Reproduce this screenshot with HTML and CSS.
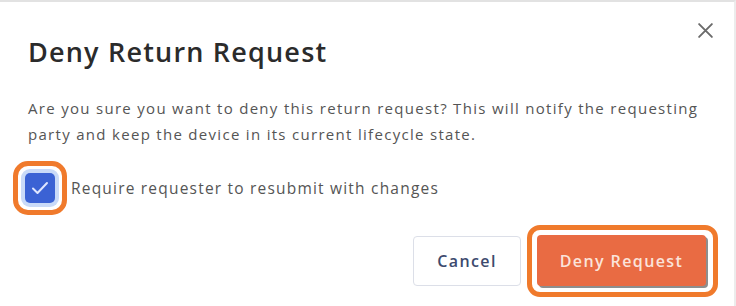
FILE: index.html
```html
<!DOCTYPE html>
<html>
<head>
<meta charset="utf-8">
<link rel="stylesheet" href="styles.css">
</head>
<body>
<div class="modal">
  <div class="header">
    <h1 class="title">Deny Return Request</h1>
    <button class="close" aria-label="Close">
      <svg width="17" height="17" viewBox="0 0 16 16"><path d="M2 2L14 14M14 2L2 14" stroke="#6b6b6b" stroke-width="1.8" stroke-linecap="round"/></svg>
    </button>
  </div>
  <p class="desc">Are you sure you want to deny this return request? This will notify the requesting party and keep the device in its current lifecycle state.</p>
  <label class="check-row">
    <span class="ring ring-check">
      <span class="checkbox">
        <svg width="18" height="14" viewBox="0 0 18 14"><path d="M2 7.5L6.5 12L16 2" fill="none" stroke="#dfe6ff" stroke-width="2" stroke-linecap="round" stroke-linejoin="round"/></svg>
      </span>
    </span>
    <span class="check-label">Require requester to resubmit with changes</span>
  </label>
  <div class="actions">
    <button class="btn btn-cancel">Cancel</button>
    <span class="ring ring-btn"><button class="btn btn-deny">Deny Request</button></span>
  </div>
</div>
</body>
</html>
```
FILE: styles.css
```css
html, body {
  margin: 0;
  padding: 0;
  background: #ffffff;
}
body {
  width: 736px;
  height: 306px;
  overflow: hidden;
  font-family: "Open Sans", "Noto Sans", sans-serif;
}
.modal {
  box-sizing: border-box;
  height: 306px;
  border-top: 2px solid #e2e2e2;
  border-right: 2px solid #ececec;
  padding: 16px 16px 0 28px;
}
.header {
  display: flex;
  justify-content: space-between;
  align-items: flex-start;
}
.title {
  margin: 17px 0 0;
  font-size: 27px;
  font-weight: 600;
  line-height: 34px;
  color: #2b2b2b;
  letter-spacing: 1.2px;
}
.close {
  border: 0;
  background: transparent;
  padding: 4px;
  margin: 0;
  display: flex;
  cursor: pointer;
}
.desc {
  margin: 26px 0 0;
  font-size: 15px;
  line-height: 26px;
  color: #555555;
  letter-spacing: 1.3px;
  max-width: 678px;
}
.check-row {
  display: flex;
  align-items: center;
  margin: 14px 0 0 -15px;
  gap: 4px;
}
.ring {
  display: inline-flex;
  border: 5px solid #f07a2c;
  background: #ffffff;
}
.ring-check {
  border-radius: 15px;
  padding: 7px;
}
.checkbox {
  width: 30px;
  height: 30px;
  box-sizing: border-box;
  border-radius: 5px;
  background: #3b62d4;
  box-shadow: 0 0 0 4px #c9daf8;
  display: flex;
  align-items: center;
  justify-content: center;
}
.check-label {
  font-size: 15.5px;
  color: #555555;
  letter-spacing: 1.2px;
}
.actions {
  display: flex;
  justify-content: flex-end;
  align-items: center;
  gap: 6px;
  margin-top: 10px;
}
.btn {
  font-family: inherit;
  font-size: 16px;
  font-weight: 600;
  letter-spacing: 1.4px;
  cursor: pointer;
}
.btn-cancel {
  width: 108px;
  height: 50px;
  background: #ffffff;
  border: 1px solid #dcdfe8;
  border-radius: 4px;
  color: #3d4a6e;
}
.ring-btn {
  border-radius: 13px;
  padding: 5px 7px 6px 5px;
}
.btn-deny {
  width: 169px;
  height: 51px;
  border: 0;
  border-radius: 4px;
  background: #e96b43;
  color: #fbe3da;
  box-shadow: 2px 2px 0 #8e8e8e;
}
```
